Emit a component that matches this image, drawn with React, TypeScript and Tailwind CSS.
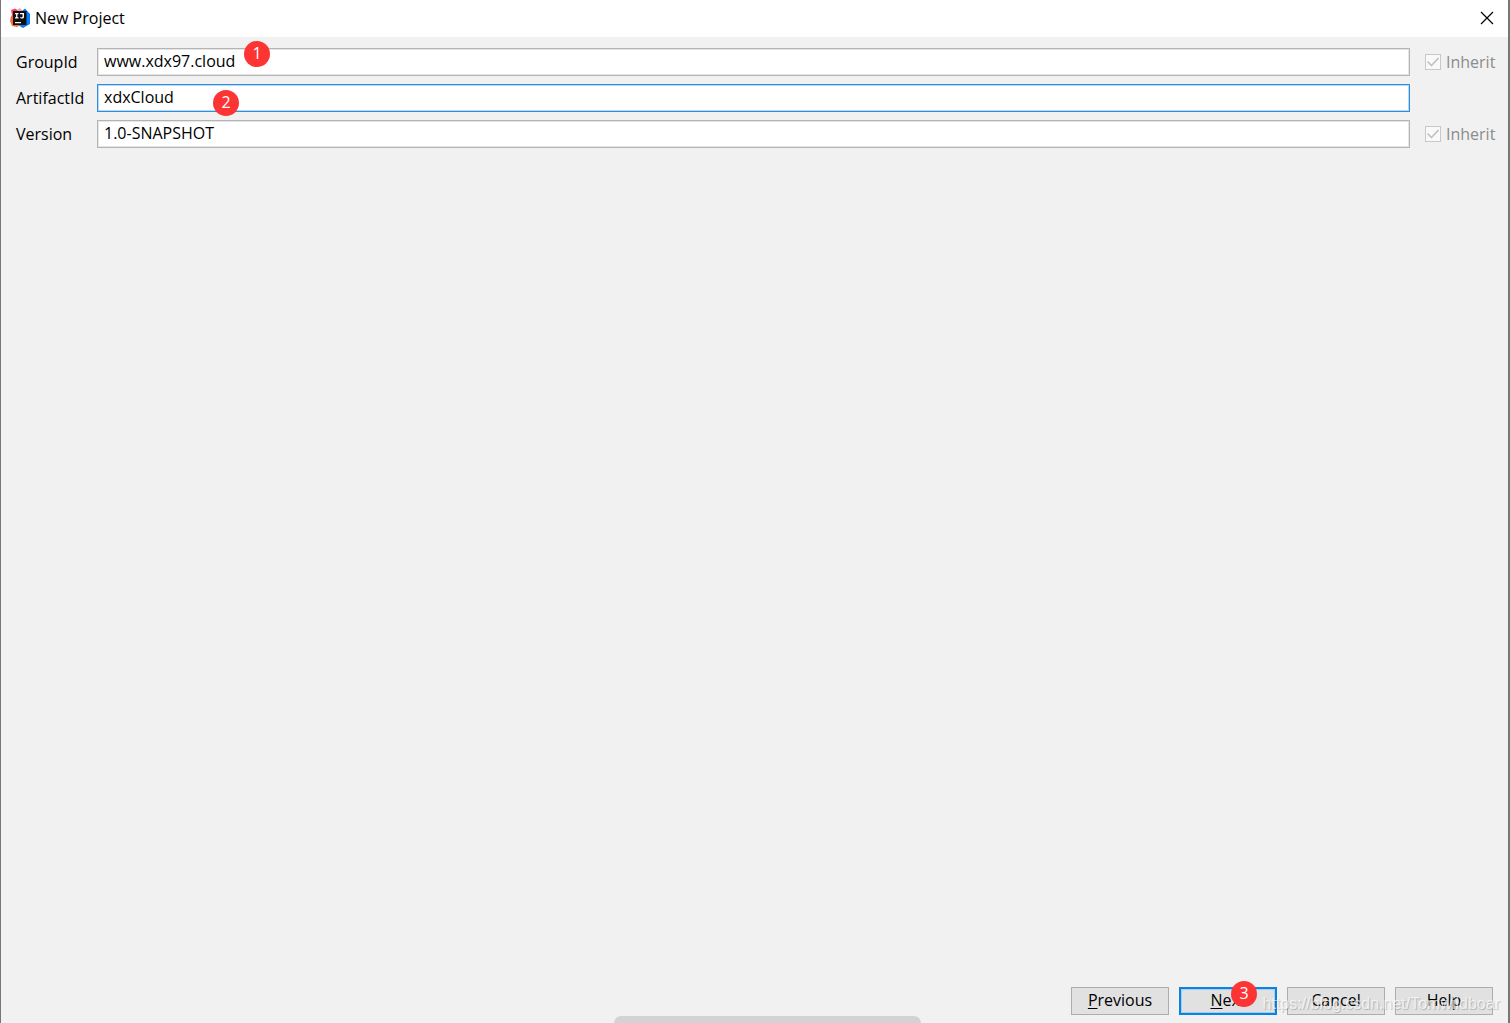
import React, { useState } from 'react';

interface TextRowProps {
  id: string;
  label: string;
  value: string;
  onChange: (value: string) => void;
  inherit?: boolean;
  marker?: React.ReactNode;
}

const Marker: React.FC<{ className: string; children: React.ReactNode }> = ({ className, children }) => (
  <span className={`absolute flex h-[26px] w-[26px] items-center justify-center rounded-full bg-[#fc3434] pb-[2px] text-base leading-none text-white ${className}`}>
    {children}
  </span>
);

const AppLogo: React.FC = () => (
  <svg width="20" height="20" viewBox="0 0 20 20" aria-hidden="true">
    <path d="M1 2 5 .5l5 3V11l-9 2-.5-3L2 7z" fill="#fb3f62" />
    <path d="M0 13 2 8l7 10-2 1-5-1z" fill="#fa6a3c" />
    <path d="M7 2 10 0l3 3-4 2z" fill="#f3a5b8" />
    <path d="M12 3 15 .5l5 5.500v10l-7 4-5-3z" fill="#087cfa" />
    <path d="M3 3h13.500v14H3z" fill="#101010" />
    <path d="M5 5h3.500v1.200H7.400v3.100h1.100v1.200H5V9.300h1.100V6.200H5zM10 5h4v3.700c0 1.200-.7 1.900-2 1.900-.9 0-1.500-.3-1.900-.9l.8-.9c.3.400.6.600 1 .6s.7-.3.7-.8V6.200H10zM5 14h6v1.200H5z" fill="#fff" />
  </svg>
);

const InheritBox: React.FC<{ id: string }> = ({ id }) => (
  <div className="flex items-center gap-[5px] pl-[15px]">
    <span className="relative h-4 w-4">
      <input id={id} type="checkbox" checked readOnly disabled className="block h-4 w-4 appearance-none border border-[#c8c8c8] bg-[#f9f9f9]" />
      <svg className="pointer-events-none absolute inset-0" width="16" height="16" viewBox="0 0 16 16" fill="none" stroke="#bdbdbd" strokeWidth="1.500" aria-hidden="true">
        <path d="m2.500 7.500 4 4 7-7.500" />
      </svg>
    </span>
    <label htmlFor={id} className="text-[#8c8c8c]">Inherit</label>
  </div>
);

const TextRow: React.FC<TextRowProps> = ({ id, label, value, onChange, inherit, marker }) => (
  <>
    <label htmlFor={id}>{label}</label>
    <div className="relative">
      <input
        id={id}
        type="text"
        value={value}
        onChange={(e) => onChange(e.target.value)}
        className={`block h-7 w-full border bg-white px-[6px] pb-[2px] outline-none ${id === 'artifactId' ? 'border-[#2f8fdc] shadow-[inset_0_0_0_1px_#b4d8f5]' : 'border-[#b4b4b4] shadow-[inset_0_0_0_1px_#e6e6e6]'}`}
      />
      {marker}
    </div>
    {inherit ? <InheritBox id={`${id}-inherit`} /> : <span />}
  </>
);

const App: React.FC = () => {
  const [groupId, setGroupId] = useState('www.xdx97.cloud');
  const [artifactId, setArtifactId] = useState('xdxCloud');
  const [version, setVersion] = useState('1.0-SNAPSHOT');

  const buttonClass = 'h-7 w-[98px] border border-[#adadad] bg-[#e1e1e1] pb-[2px] leading-none';

  return (
    <div className="relative flex min-h-screen flex-col overflow-hidden border-r-2 border-l border-r-[#777777] border-l-[#777777] bg-[#f1f1f1] font-['Open_Sans','Noto_Sans_CJK_SC',sans-serif] text-base leading-6 text-black">
      <header className="flex h-[37px] items-center bg-white pr-[14px] pb-[2px] pl-[9px]">
        <AppLogo />
        <h1 className="ml-[5px]">New Project</h1>
        <button type="button" aria-label="Close" className="ml-auto">
          <svg width="14" height="14" viewBox="0 0 14 14" stroke="#000" strokeWidth="1.200" aria-hidden="true">
            <path d="m1 1 12 12M13 1 1 13" />
          </svg>
        </button>
      </header>

      <main className="grid flex-1 grid-cols-[81px_1fr_83px] content-start items-center gap-y-2 pt-[11px] pr-[15px] pl-[15px]">
        <TextRow id="groupId" label="GroupId" value={groupId} onChange={setGroupId} inherit marker={<Marker className="-top-[7px] left-[147px]">1</Marker>} />
        <TextRow id="artifactId" label="ArtifactId" value={artifactId} onChange={setArtifactId} marker={<Marker className="top-[6px] left-[116px]">2</Marker>} />
        <TextRow id="version" label="Version" value={version} onChange={setVersion} inherit />
      </main>

      <footer className="flex justify-end gap-[10px] pr-[15px] pb-2">
        <button type="button" className={buttonClass}><span className="underline underline-offset-2">P</span>revious</button>
        <div className="relative">
          <button type="button" className="h-7 w-[98px] border-2 border-[#0b84e0] bg-[#e1e1e1] pb-[2px] leading-none shadow-[inset_0_0_0_1px_#a5cdf0]"><span className="underline underline-offset-2">N</span>ext</button>
          <Marker className="-top-[6px] left-[52px]">3</Marker>
        </div>
        <button type="button" className={buttonClass}>Cancel</button>
        <button type="button" className={buttonClass}>Help</button>
      </footer>

      <div className="absolute bottom-0 left-[613px] h-[7px] w-[307px] rounded-t-xl bg-[#d3d3d3]" />
      <span className="pointer-events-none absolute right-[8px] bottom-[7px] font-['Liberation_Sans',sans-serif] text-base text-white/70 [text-shadow:1px_1px_1px_rgba(0,0,0,0.2)]">
        https://blog.csdn.net/Tomwildboar
      </span>
    </div>
  );
};

export default App;
